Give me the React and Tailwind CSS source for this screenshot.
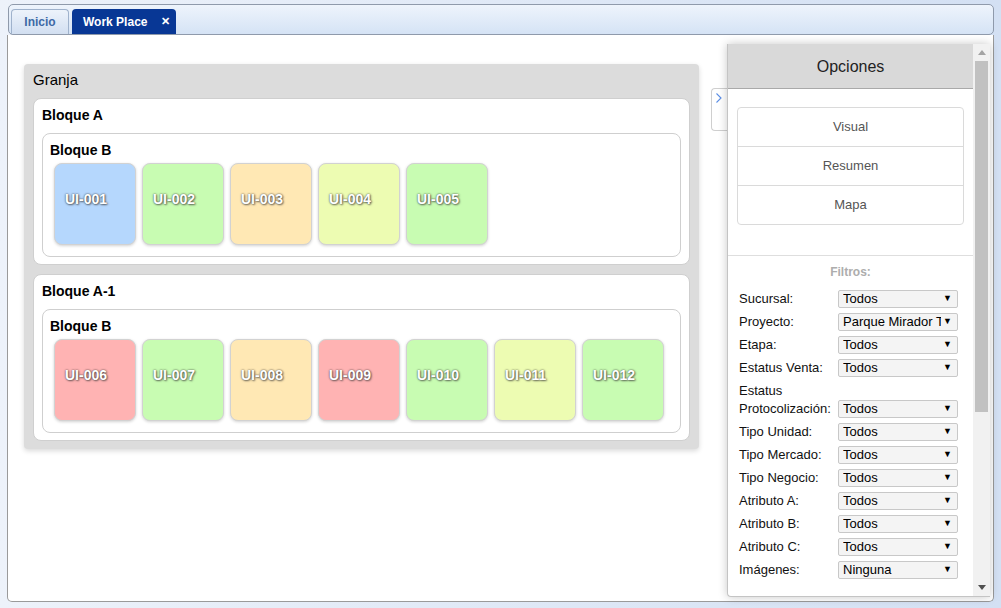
import React from 'react';

const FONT = { fontFamily: '"Liberation Sans", Arial, sans-serif' };

const TILE_COLORS = {
  blue: 'bg-[#b5d7fd]',
  green: 'bg-[#c8fcb2]',
  orange: 'bg-[#ffe8b4]',
  yellow: 'bg-[#edfcb2]',
  red: 'bg-[#ffb3b3]',
};

const BLOCKS = [
  {
    name: 'Bloque A',
    inner: 'Bloque B',
    units: [
      ['UI-001', 'blue'],
      ['UI-002', 'green'],
      ['UI-003', 'orange'],
      ['UI-004', 'yellow'],
      ['UI-005', 'green'],
    ],
  },
  {
    name: 'Bloque A-1',
    inner: 'Bloque B',
    units: [
      ['UI-006', 'red'],
      ['UI-007', 'green'],
      ['UI-008', 'orange'],
      ['UI-009', 'red'],
      ['UI-010', 'green'],
      ['UI-011', 'yellow'],
      ['UI-012', 'green'],
    ],
  },
];

const FILTERS = [
  ['Sucursal:', 'Todos'],
  ['Proyecto:', 'Parque Mirador Tor'],
  ['Etapa:', 'Todos'],
  ['Estatus Venta:', 'Todos'],
  ['Estatus Protocolización:', 'Todos'],
  ['Tipo Unidad:', 'Todos'],
  ['Tipo Mercado:', 'Todos'],
  ['Tipo Negocio:', 'Todos'],
  ['Atributo A:', 'Todos'],
  ['Atributo B:', 'Todos'],
  ['Atributo C:', 'Todos'],
  ['Imágenes:', 'Ninguna'],
];

function Tile({ label, color }) {
  return (
    <div
      className={`w-[82px] h-[82px] rounded-[8px] border border-[#d2d2d2] shadow-[0_1px_3px_rgba(0,0,0,0.18)] pt-[26px] pl-[10px] text-[14px] leading-[18px] font-bold text-white [text-shadow:0_0_2px_rgba(40,40,40,0.9),1px_1px_2px_rgba(60,60,60,0.6)] ${TILE_COLORS[color]}`}
    >
      {label}
    </div>
  );
}

function Block({ block }) {
  return (
    <div className="bg-white border border-[#cfcfcf] rounded-[8px] pt-[7px] pl-[8px] pr-[8px] pb-[7px]">
      <div className="text-[14px] font-bold text-black leading-[18px] h-[27px]">{block.name}</div>
      <div className="border border-[#cfcfcf] rounded-[8px] pt-[7px] pl-[7px] pb-[11px]">
        <div className="text-[14px] font-bold text-black leading-[18px] h-[22px]">{block.inner}</div>
        <div className="flex gap-[6px] pl-[4px]">
          {block.units.map(([l, c]) => (
            <Tile key={l} label={l} color={c} />
          ))}
        </div>
      </div>
    </div>
  );
}

function Select({ value }) {
  return (
    <div className="w-[120px] h-[18px] shrink-0 bg-[#f4f4f4] border border-[#c8c8c8] rounded-[2px] flex items-center pl-[4px] pr-[5px] text-[13px] text-black overflow-hidden">
      <span className="flex-1 whitespace-nowrap overflow-hidden">{value}</span>
      <span className="text-[9px] pl-[2px] bg-[#f4f4f4]">▼</span>
    </div>
  );
}

export default function App() {
  return (
    <div className="w-[1001px] h-[608px] bg-gradient-to-r from-[#edf2fa] to-[#d3e0f3] pt-[4px] overflow-hidden" style={FONT}>
      {/* tab bar */}
      <div className="ml-[8px] w-[986px] h-[31px] border border-[#8f9aab] rounded-[5px] bg-gradient-to-b from-[#eef4fc] to-[#d5e3f5] flex items-end pl-[2px] gap-[3px]">
        <div className="w-[58px] h-[25px] rounded-t-[4px] border border-b-0 border-[#9fb2cc] bg-gradient-to-b from-[#edf3fb] to-[#d2dff1] text-[12px] font-bold text-[#3e6aa6] flex items-center justify-center">
          Inicio
        </div>
        <div className="w-[104px] h-[25px] rounded-t-[4px] bg-[#083795] text-[12px] font-bold text-white flex items-center pl-[11px]">
          <span className="flex-1">Work Place</span>
          <span className="pr-[6px] text-[11px]">✕</span>
        </div>
      </div>

      {/* content */}
      <div className="ml-[7px] w-[987px] h-[567px] border border-t-0 border-[#9a9a9a] rounded-b-[5px] bg-white flex">
        <div className="w-[703px] pl-[16px] pt-[29px]">
          <div className="w-[675px] bg-[#dcdcdc] rounded-[4px] shadow-[0_2px_5px_rgba(0,0,0,0.15)] pt-[7px] pl-[9px] pr-[9px] pb-[8px]">
            <div className="text-[15px] text-black leading-[18px] h-[27px]">Granja</div>
            <div className="flex flex-col gap-[9px]">
              {BLOCKS.map((b) => (
                <Block key={b.name} block={b} />
              ))}
            </div>
          </div>
        </div>

        {/* collapse handle */}
        <div className="w-[16px] pt-[53px]">
          <div className="h-[43px] border border-r-0 border-[#cfcfcf] rounded-l-[4px] bg-white pl-[3px] pt-[3px]">
            <svg width="8" height="12" viewBox="0 0 8 12" fill="none">
              <path d="M1.5 1.5 6 6l-4.5 4.5" stroke="#5b8ee6" strokeWidth="1.1" />
            </svg>
          </div>
        </div>

        {/* options panel */}
        <div className="w-[263px] pt-[9px] pb-[4px]">
          <div className="h-full flex border-l border-b border-[#c4c4c4] rounded-bl-[4px] shadow-[0_0_10px_rgba(0,0,0,0.22)] overflow-hidden bg-white">
            <div className="w-[246px] flex flex-col">
              <div className="h-[45px] pt-[2px] bg-[#d9d9d9] border-b border-[#a9a9a9] flex items-center justify-center text-[16px] text-[#222]">
                Opciones
              </div>
              <div className="pt-[18px] px-[9px] pb-[30px] border-b border-[#dedede]">
                <div className="border border-[#dadada] rounded-[4px] text-[13px] text-[#555]">
                  <div className="h-[39px] flex items-center justify-center border-b border-[#dadada]">Visual</div>
                  <div className="h-[39px] flex items-center justify-center border-b border-[#dadada]">Resumen</div>
                  <div className="h-[38px] flex items-center justify-center">Mapa</div>
                </div>
              </div>
              <div className="text-center text-[12px] font-bold text-[#adadad] pt-[7px] h-[34px]">Filtros:</div>
              <div className="pl-[11px] flex flex-col gap-[5px]">
                {FILTERS.map(([label, value]) => (
                  <div key={label} className="flex items-end">
                    <div className="w-[99px] text-[13px] leading-[18px] text-[#111] shrink-0">{label}</div>
                    <Select value={value} />
                  </div>
                ))}
              </div>
            </div>
            {/* scrollbar */}
            <div className="w-[17px] bg-[#f1f1f1] flex flex-col items-center">
              <div className="h-[17px] flex items-center justify-center">
                <svg width="8" height="5" viewBox="0 0 8 5"><path d="M0 5 4 0l4 5z" fill="#a3a3a3" /></svg>
              </div>
              <div className="w-[13px] h-[351px] bg-[#c1c1c1]" />
              <div className="flex-1" />
              <div className="h-[17px] flex items-center justify-center">
                <svg width="8" height="5" viewBox="0 0 8 5"><path d="M0 0h8L4 5z" fill="#505050" /></svg>
              </div>
            </div>
          </div>
        </div>
      </div>
    </div>
  );
}
